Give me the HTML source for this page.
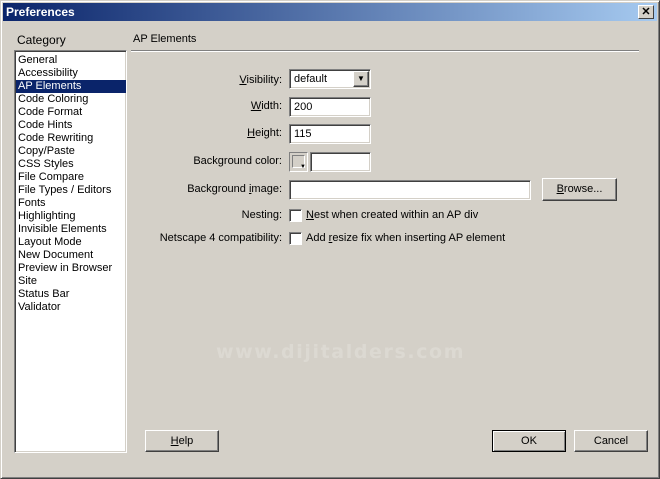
<!DOCTYPE html>
<html><head><style>
*{margin:0;padding:0;box-sizing:border-box}
body{width:660px;height:479px;background:#d4d0c8;font-family:"Liberation Sans",sans-serif;font-size:11px;color:#000;position:relative;overflow:hidden}
.abs{position:absolute}
.win{position:absolute;left:0;top:0;width:660px;height:479px;border:1px solid;border-color:#d4d0c8 #404040 #404040 #d4d0c8;box-shadow:inset 1px 1px 0 #fff,inset -1px -1px 0 #808080}
.title{position:absolute;left:3px;top:3px;width:654px;height:18px;background:linear-gradient(to right,#0a246a,#a6caf0);color:#fff;font-weight:bold;font-size:12px;line-height:18px;padding-left:3px}
.x{position:absolute;right:3px;top:2px;width:16px;height:14px;background:#d4d0c8;border:1px solid;border-color:#fff #404040 #404040 #fff;color:#000;font-size:11px;line-height:12px;text-align:center;font-weight:bold}
.sunk{position:absolute;background:#fff;border:1px solid;border-color:#808080 #fff #fff #808080;box-shadow:inset 1px 1px 0 #404040,inset -1px -1px 0 #d4d0c8}
.list div{height:13px;line-height:13px;padding-left:2px}
.sel{background:#0a246a;color:#fff}
.lbl{position:absolute;text-align:right;width:200px;line-height:14px}
.inp{line-height:18px;padding-left:4px}
.btn{position:absolute;background:#d4d0c8;border:1px solid;border-color:#fff #404040 #404040 #fff;box-shadow:inset -1px -1px 0 #808080;text-align:center;line-height:20px}
.cb{position:absolute;width:13px;height:13px;background:#fff;border:1px solid;border-color:#808080 #fff #fff #808080;box-shadow:inset 1px 1px 0 #404040}
u{text-decoration:underline}
</style></head><body>
<div class="win"></div>
<div class="title">Preferences<div class="x">✕</div></div>
<div class="abs" style="left:17px;top:33px;font-size:12px">Category</div>
<div class="abs" style="left:133px;top:33px">AP Elements</div>
<div class="abs" style="left:131px;top:50px;width:508px;height:2px;border-top:1px solid #808080;border-bottom:1px solid #fff"></div>
<div class="sunk list" style="left:14px;top:50px;width:113px;height:403px;padding-top:3px;padding-left:1px">
<div>General</div><div>Accessibility</div><div class="sel">AP Elements</div><div>Code Coloring</div><div>Code Format</div><div>Code Hints</div><div>Code Rewriting</div><div>Copy/Paste</div><div>CSS Styles</div><div>File Compare</div><div>File Types / Editors</div><div>Fonts</div><div>Highlighting</div><div>Invisible Elements</div><div>Layout Mode</div><div>New Document</div><div>Preview in Browser</div><div>Site</div><div>Status Bar</div><div>Validator</div>
</div>
<div class="lbl" style="left:82px;top:73px"><u>V</u>isibility:</div>
<div class="sunk inp" style="left:289px;top:69px;width:82px;height:20px">default</div>
<div class="btn" style="left:353px;top:71px;width:16px;height:16px;line-height:14px;font-size:8px">▼</div>
<div class="lbl" style="left:82px;top:99px"><u>W</u>idth:</div>
<div class="sunk inp" style="left:289px;top:97px;width:82px;height:20px">200</div>
<div class="lbl" style="left:82px;top:126px"><u>H</u>eight:</div>
<div class="sunk inp" style="left:289px;top:124px;width:82px;height:20px">115</div>
<div class="lbl" style="left:82px;top:154px">Background color:</div>
<div class="abs" style="left:289px;top:152px;width:19px;height:20px;border:1px solid;border-color:#808080 #fff #fff #808080"><div style="position:absolute;left:2px;top:2px;width:13px;height:13px;border:1px solid;border-color:#808080 #fff #fff #808080"></div><div style="position:absolute;right:1px;bottom:1px;font-size:6px;line-height:6px">▼</div></div>
<div class="sunk" style="left:310px;top:152px;width:61px;height:20px"></div>
<div class="lbl" style="left:82px;top:182px">Background <u>i</u>mage:</div>
<div class="sunk" style="left:289px;top:180px;width:242px;height:20px"></div>
<div class="btn" style="left:542px;top:178px;width:75px;height:23px;line-height:21px"><u>B</u>rowse...</div>
<div class="lbl" style="left:82px;top:208px">Nesting:</div>
<div class="cb" style="left:289px;top:209px"></div>
<div class="abs" style="left:306px;top:208px;line-height:14px"><u>N</u>est when created within an AP div</div>
<div class="lbl" style="left:82px;top:231px">Netscape 4 compatibility:</div>
<div class="cb" style="left:289px;top:232px"></div>
<div class="abs" style="left:306px;top:231px;line-height:14px">Add <u>r</u>esize fix when inserting AP element</div>
<div class="abs" style="left:216px;top:341px;font-size:19px;font-weight:bold;color:#dcd9d2;letter-spacing:1.6px;font-family:'DejaVu Sans',sans-serif">www.dijitalders.com</div>
<div class="btn" style="left:145px;top:430px;width:74px;height:22px"><u>H</u>elp</div>
<div class="btn" style="left:492px;top:430px;width:74px;height:22px;border:1px solid #000;box-shadow:inset 1px 1px 0 #fff,inset -1px -1px 0 #808080">OK</div>
<div class="btn" style="left:574px;top:430px;width:74px;height:22px">Cancel</div>
</body></html>
